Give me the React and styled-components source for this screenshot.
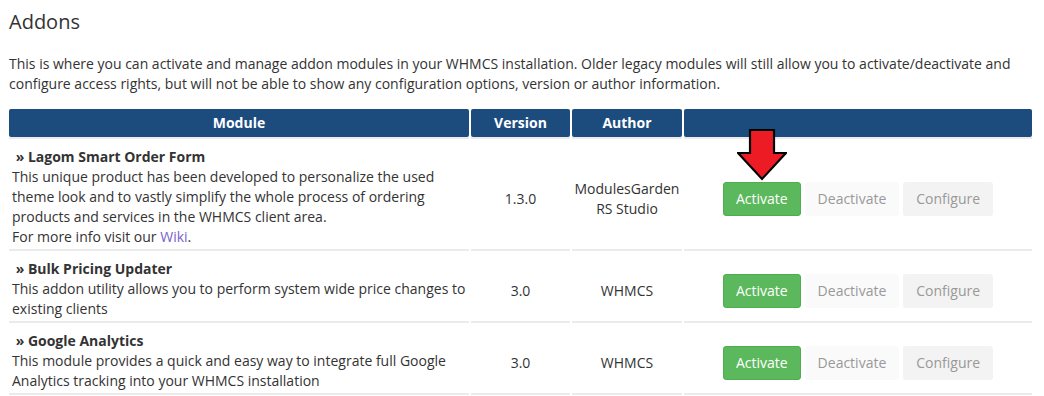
import styled, { createGlobalStyle } from "styled-components";

const GlobalStyle = createGlobalStyle`
  body {
    margin: 0;
    background: #fff;
    font-family: "Open Sans", "Liberation Sans", sans-serif;
    font-size: 14px;
    color: #333;
  }
`;

const modules = [
  {
    name: "Lagom Smart Order Form",
    description:
      "This unique product has been developed to personalize the used theme look and to vastly simplify the whole process of ordering products and services in the WHMCS client area.",
    wiki: true,
    version: "1.3.0",
    authors: ["ModulesGarden", "RS Studio"],
    highlight: true,
  },
  {
    name: "Bulk Pricing Updater",
    description:
      "This addon utility allows you to perform system wide price changes to existing clients",
    version: "3.0",
    authors: ["WHMCS"],
  },
  {
    name: "Google Analytics",
    description:
      "This module provides a quick and easy way to integrate full Google Analytics tracking into your WHMCS installation",
    version: "3.0",
    authors: ["WHMCS"],
  },
];

function Arrow() {
  return (
    <StyledArrow width="50" height="52" viewBox="0 0 50 52">
      <path
        d="M13 1 H37 V24 H49 L25 50 L1 24 H13 Z"
        fill="#ed1c24"
        stroke="#000"
        strokeWidth="2.2"
        strokeLinejoin="miter"
      />
    </StyledArrow>
  );
}

function App() {
  return (
    <>
      <GlobalStyle />
      <StyledPage>
        <StyledHeading>Addons</StyledHeading>
        <StyledIntro>
          This is where you can activate and manage addon modules in your WHMCS
          installation. Older legacy modules will still allow you to
          activate/deactivate and configure access rights, but will not be able
          to show any configuration options, version or author information.
        </StyledIntro>
        <StyledTable>
          <StyledRow>
            <StyledHeadCell>Module</StyledHeadCell>
            <StyledHeadCell>Version</StyledHeadCell>
            <StyledHeadCell>Author</StyledHeadCell>
            <StyledHeadCell />
          </StyledRow>
          {modules.map((m, i) => (
            <StyledRow key={m.name} $last={i === modules.length - 1}>
              <StyledInfoCell>
                <StyledTitle>&nbsp;» {m.name}</StyledTitle>
                {m.description}
                {m.wiki && (
                  <>
                    <br />
                    For more info visit our <StyledLink href="#">Wiki</StyledLink>.
                  </>
                )}
              </StyledInfoCell>
              <StyledCell>{m.version}</StyledCell>
              <StyledCell>
                {m.authors.map((a) => (
                  <div key={a}>{a}</div>
                ))}
              </StyledCell>
              <StyledCell>
                <StyledActions>
                  {m.highlight && <Arrow />}
                  <StyledButton $variant="success">Activate</StyledButton>
                  <StyledButton $variant="faint">Deactivate</StyledButton>
                  <StyledButton $variant="light">Configure</StyledButton>
                </StyledActions>
              </StyledCell>
            </StyledRow>
          ))}
        </StyledTable>
      </StyledPage>
    </>
  );
}

const StyledPage = styled.div`
  padding: 0 12px 0 9px;
`;

const StyledHeading = styled.h1`
  font-size: 20px;
  font-weight: 400;
  line-height: 24px;
  margin: 0;
  padding-top: 10px;
`;

const StyledIntro = styled.p`
  line-height: 20px;
  margin: 20px 0 15px;
`;

const StyledTable = styled.div`
  display: flex;
  flex-direction: column;
`;

const StyledRow = styled.div`
  display: grid;
  grid-template-columns: 460px 99px 110px 1fr;
  column-gap: 2px;
  & > * {
    border-bottom: ${(p) => (p.$last ? "2px solid #ebebeb" : "none")};
  }
`;

const StyledHeadCell = styled.div`
  background: #1c4c7e;
  color: #fff;
  font-weight: 700;
  text-align: center;
  line-height: 28px;
  height: 28px;
  border-radius: 2px;
`;

const StyledCell = styled.div`
  border-top: 2px solid #ebebeb;
  display: flex;
  flex-direction: column;
  align-items: center;
  justify-content: center;
  text-align: center;
  line-height: 20px;
  padding: 12px 4px 2px;
`;

const StyledInfoCell = styled.div`
  border-top: 2px solid #ebebeb;
  line-height: 20px;
  padding: 8px 2px 2px 3px;
`;

const StyledTitle = styled.div`
  font-weight: 700;
`;

const StyledLink = styled.a`
  color: #7a5fcf;
  text-decoration: none;
`;

const StyledActions = styled.div`
  position: relative;
  display: flex;
  gap: 4px;
`;

const StyledArrow = styled.svg`
  position: absolute;
  left: 14px;
  top: -53px;
`;

const buttonColors = {
  success: { bg: "#5cb85c", fg: "#fff" },
  faint: { bg: "#fafafa", fg: "#999" },
  light: { bg: "#f3f3f3", fg: "#999" },
};

const StyledButton = styled.button`
  font-family: inherit;
  font-size: 14px;
  line-height: 20px;
  padding: 6px 12px;
  border: 1px solid transparent;
  border-color: ${(p) => (p.$variant === "success" ? "#4cae4c" : "transparent")};
  border-radius: 3px;
  background: ${(p) => buttonColors[p.$variant].bg};
  color: ${(p) => buttonColors[p.$variant].fg};
  cursor: pointer;
`;

export default App;
